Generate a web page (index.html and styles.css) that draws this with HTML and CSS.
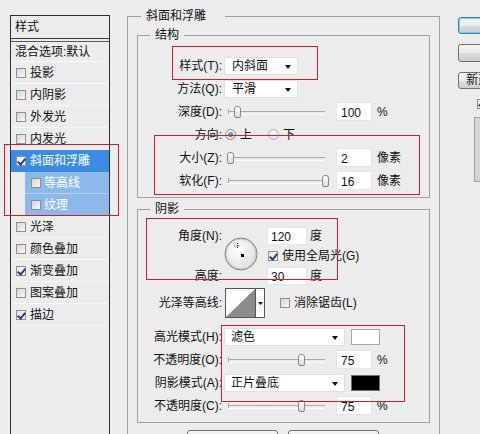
FILE: index.html
```html
<!DOCTYPE html>
<html lang="zh-CN">
<head>
<meta charset="utf-8">
<title>图层样式</title>
<link rel="stylesheet" href="styles.css">
</head>
<body>
<div class="dialog">
  <aside class="styles-panel">
    <div class="panel-head">样式</div>
    <ul class="style-list">
      <li class="row blend">混合选项:默认</li>
      <li class="row"><span class="cb"></span>投影</li>
      <li class="row"><span class="cb"></span>内阴影</li>
      <li class="row"><span class="cb"></span>外发光</li>
      <li class="row"><span class="cb"></span>内发光</li>
      <li class="row sel"><span class="cb on"></span>斜面和浮雕</li>
      <li class="row sub"><span class="cb"></span>等高线</li>
      <li class="row sub"><span class="cb"></span>纹理</li>
      <li class="row"><span class="cb"></span>光泽</li>
      <li class="row"><span class="cb"></span>颜色叠加</li>
      <li class="row"><span class="cb on"></span>渐变叠加</li>
      <li class="row"><span class="cb"></span>图案叠加</li>
      <li class="row"><span class="cb on"></span>描边</li>
    </ul>
  </aside>

  <main class="settings">
    <fieldset class="group outer">
      <legend class="outer-title">斜面和浮雕</legend>

      <fieldset class="group inner structure">
        <legend class="inner-title">结构</legend>
        <div class="frow">
          <span class="lbl">样式(T):</span>
          <div class="select narrow"><span>内斜面</span><i class="caret"></i></div>
        </div>
        <div class="frow">
          <span class="lbl">方法(Q):</span>
          <div class="select narrow"><span>平滑</span><i class="caret"></i></div>
        </div>
        <div class="frow">
          <span class="lbl">深度(D):</span>
          <div class="slider"><i class="thumb" style="--v:10"></i></div>
          <span class="num">100</span><span class="unit">%</span>
        </div>
        <div class="frow">
          <span class="lbl">方向:</span>
          <span class="radio on"></span><span class="opt">上</span>
          <span class="radio down"></span><span class="opt">下</span>
        </div>
        <div class="frow">
          <span class="lbl">大小(Z):</span>
          <div class="slider"><i class="thumb" style="--v:3"></i></div>
          <span class="num">2</span><span class="unit">像素</span>
        </div>
        <div class="frow">
          <span class="lbl">软化(F):</span>
          <div class="slider"><i class="thumb" style="--v:100"></i></div>
          <span class="num">16</span><span class="unit">像素</span>
        </div>
      </fieldset>

      <fieldset class="group inner shading">
        <legend class="inner-title">阴影</legend>
        <div class="angle-block">
          <div class="lbl-col"><span>角度(N):</span><span>高度:</span></div>
          <svg class="dial" width="34" height="34" viewBox="0 0 34 34">
            <defs>
              <radialGradient id="dialFill" cx="42%" cy="38%" r="65%">
                <stop offset="0" stop-color="#ffffff"/>
                <stop offset="1" stop-color="#dedede"/>
              </radialGradient>
            </defs>
            <circle cx="17" cy="17" r="16" fill="url(#dialFill)" stroke="#7a7a7a"/>
            <circle cx="17" cy="17" r="15" fill="none" stroke="#c4c4c4"/>
            <path d="M13.5 6v6M10.5 9h6" stroke="#333" stroke-width="1" stroke-dasharray="1 1"/>
            <rect x="17" y="17" width="3" height="3" fill="#000"/>
          </svg>
          <div class="val-col">
            <div class="vrow"><span class="num wide">120</span><span class="unit near">度</span></div>
            <div class="vrow"><span class="cb on global"></span><span class="cb-text">使用全局光(G)</span></div>
            <div class="vrow"><span class="num wide">30</span><span class="unit near">度</span></div>
          </div>
        </div>

        <div class="frow contour-row">
          <span class="lbl">光泽等高线:</span>
          <svg class="contour" width="40" height="30" viewBox="0 0 40 30">
            <rect x="0.5" y="0.5" width="39" height="29" fill="#fff" stroke="#555"/>
            <path d="M1 29L30 1V29Z" fill="#8c8c8c"/>
            <path d="M30.5 1V29" stroke="#555"/>
            <path d="M33 14h5l-2.5 3z" fill="#111"/>
          </svg>
          <span class="cb aa"></span><span class="cb-text">消除锯齿(L)</span>
        </div>
        <div class="frow">
          <span class="lbl">高光模式(H):</span>
          <div class="select wide-sel"><span>滤色</span><i class="caret"></i></div>
          <span class="swatch white"></span>
        </div>
        <div class="frow">
          <span class="lbl">不透明度(O):</span>
          <div class="slider"><i class="thumb" style="--v:76"></i></div>
          <span class="num">75</span><span class="unit">%</span>
        </div>
        <div class="frow">
          <span class="lbl">阴影模式(A):</span>
          <div class="select wide-sel"><span>正片叠底</span><i class="caret"></i></div>
          <span class="swatch black"></span>
        </div>
        <div class="frow">
          <span class="lbl">不透明度(C):</span>
          <div class="slider"><i class="thumb" style="--v:76"></i></div>
          <span class="num">75</span><span class="unit">%</span>
        </div>
      </fieldset>

      <div class="default-buttons">
        <button class="btn">设置为默认值</button>
        <button class="btn">复位为默认值</button>
      </div>
    </fieldset>
  </main>

  <div class="side">
    <button class="btn side-btn primary">确定</button>
    <button class="btn side-btn cancel">取消</button>
    <button class="btn side-btn new">新建样式(W)...</button>
    <div class="preview-row"><span class="cb on"></span><span class="cb-text">预览(V)</span></div>
    <div class="preview-box"></div>
  </div>

  <div class="mark mark-list"></div>
  <div class="mark mark-style"></div>
  <div class="mark mark-size"></div>
  <div class="mark mark-angle"></div>
  <div class="mark mark-mode"></div>
</div>
</body>
</html>
```

FILE: styles.css
```css
* { box-sizing: border-box; }

html, body { margin: 0; padding: 0; }

body {
  width: 480px;
  height: 434px;
  overflow: hidden;
  background: #ececec;
  color: #111;
  font: 12px/1 "Liberation Sans", "Noto Sans CJK SC", sans-serif;
}

.dialog {
  position: relative;
  display: flex;
  align-items: flex-start;
  width: 480px;
  height: 434px;
  overflow: hidden;
}

/* ---------- style list on the left ---------- */
.styles-panel {
  flex: none;
  width: 100px;
  height: 440px;
  margin: 15px 0 0 10px;
  border: 1px solid #2e2e2e;
  border-bottom: none;
  background: #ececec;
}

.panel-head {
  height: 23px;
  padding-left: 4px;
  line-height: 22px;
  border-bottom: 1px solid #3a3a3a;
}

.style-list {
  list-style: none;
  margin: 2px 0 0;
  padding: 0;
  border-top: 1px solid #5a5a5a;
}

.row {
  display: flex;
  align-items: center;
  height: 22px;
  padding-left: 5px;
  border-bottom: 1px solid #f7f7f7;
  white-space: nowrap;
}

.row .cb { margin-right: 4px; }

.row.blend {
  height: 20px;
  padding-left: 4px;
}

.row.sel {
  background: #3a8be4;
  color: #fff;
  border-bottom-color: #3a8be4;
}

.row.sub {
  margin-left: 14px;
  padding-left: 6px;
  background: #8cb9ea;
  color: #fff;
  border-bottom-color: #b4d1f1;
}

.row.sub .cb { margin-right: 3px; }

/* checkbox */
.cb {
  position: relative;
  flex: none;
  width: 10px;
  height: 10px;
  border: 1px solid #8f8f8f;
  background: linear-gradient(135deg, #d4d4d4, #f8f8f8);
}

.cb.on { background: linear-gradient(135deg, #e4e4e4, #ffffff); }

.cb.on::after {
  content: "";
  position: absolute;
  left: 2px;
  top: 0;
  width: 3px;
  height: 6px;
  border: solid #2b3c7c;
  border-width: 0 2px 2px 0;
  transform: rotate(40deg);
}

/* ---------- settings area ---------- */
.settings {
  flex: none;
  width: 313px;
  margin: 8px 0 0 17px;
}

.group {
  margin: 0;
  min-width: 0;
  border: 1px solid #a0a0a0;
}

.group > legend {
  height: 16px;
  line-height: 16px;
}

.outer {
  height: 470px;
  padding: 3px 9px 0;
}

.outer-title {
  margin-left: 4px;
  padding: 0 19px 0 5px;
}

.inner { padding: 0; }

.inner-title {
  margin-left: 12px;
  padding: 0 5px;
}

.structure { padding: 11px 0 5px; }

.shading {
  margin-top: 3px;
  padding: 10px 0 5px;
}

.frow {
  display: flex;
  align-items: center;
  height: 23px;
  white-space: nowrap;
}

.lbl {
  flex: none;
  width: 84px;
  margin-right: 2px;
  text-align: right;
}

/* drop-down boxes */
.select {
  position: relative;
  display: flex;
  align-items: center;
  height: 18px;
  padding-left: 7px;
  background: #fff;
  border: 1px solid #e0e0e0;
}

.select.narrow { width: 74px; }

.select.wide-sel {
  width: 121px;
  padding-left: 6px;
}

.caret {
  position: absolute;
  right: 6px;
  top: 7px;
  width: 0;
  height: 0;
  border-left: 3.5px solid transparent;
  border-right: 3.5px solid transparent;
  border-top: 4px solid #111;
}

/* sliders */
.slider {
  position: relative;
  flex: none;
  width: 108px;
  height: 14px;
}

.slider::before {
  content: "";
  position: absolute;
  left: 4px;
  right: 7px;
  top: 6px;
  height: 2px;
  border-top: 1px solid #a9a9a9;
  border-bottom: 1px solid #fdfdfd;
}

.slider::after {
  content: "";
  position: absolute;
  left: 4px;
  top: 4px;
  width: 1px;
  height: 5px;
  background: #a9a9a9;
}

.thumb {
  position: absolute;
  z-index: 1;
  top: 1px;
  left: calc(4px + var(--v) * 0.97px - 3.5px);
  width: 7px;
  height: 12px;
  border: 1px solid #888;
  border-radius: 3px 3px 2px 2px;
  background: linear-gradient(#ffffff, #d9d9d9);
}

/* numeric fields */
.num {
  flex: none;
  width: 36px;
  height: 19px;
  margin-left: 4px;
  padding: 4px 0 0 4px;
  background: #fff;
  border: 1px solid #e6e6e6;
}

.num.wide {
  width: 40px;
  height: 18px;
  margin-left: 0;
  padding: 3px 0 0 3px;
}

.unit { margin-left: 5px; }
.unit.near { margin-left: 3px; }

/* radio buttons */
.radio {
  position: relative;
  flex: none;
  width: 11px;
  height: 11px;
  margin-left: 1px;
  border-radius: 50%;
  border: 1px solid #878787;
  background: radial-gradient(circle at 40% 35%, #ffffff, #d6d6d6);
}

.radio.on::after {
  content: "";
  position: absolute;
  inset: 2px;
  border-radius: 50%;
  background: radial-gradient(circle at 40% 35%, #8cb0dc, #1f4f96);
}

.radio.down {
  margin-left: 16px;
  border-color: #b3b3b3;
}

.opt { margin-left: 4px; }

/* angle / altitude block */
.angle-block {
  display: flex;
  align-items: flex-start;
  height: 58px;
}

.lbl-col {
  display: flex;
  flex-direction: column;
  justify-content: space-between;
  align-items: flex-end;
  width: 84px;
  height: 58px;
}

.lbl-col span {
  height: 18px;
  line-height: 18px;
}

.dial {
  flex: none;
  margin: 10px 0 0 2px;
}

.val-col {
  display: flex;
  flex-direction: column;
  gap: 2px;
  margin-left: 9px;
}

.vrow {
  display: flex;
  align-items: center;
  height: 18px;
  white-space: nowrap;
}

.global { margin-left: 1px; }

.cb-text { margin-left: 4px; }

.contour-row {
  height: 32px;
  margin: 2px 0 6px;
}

.contour {
  flex: none;
  margin-left: 1px;
}

.cb.aa { margin-left: 15px; }

.swatch {
  flex: none;
  width: 29px;
  height: 16px;
  margin-left: 6px;
}

.swatch.white {
  background: #fff;
  border: 1px solid #a5a5a5;
}

.swatch.black {
  background: #000;
  border: 1px solid #6d6d6d;
}

/* push buttons */
.btn {
  display: block;
  margin: 0;
  padding: 3px 0 0;
  font: inherit;
  line-height: 12px;
  color: #111;
  text-align: center;
  border: 1px solid #707070;
  border-radius: 3px;
  background: linear-gradient(#f4f4f4 0%, #ebebeb 50%, #dcdcdc 51%, #cfcfcf 100%);
  white-space: nowrap;
}

.default-buttons {
  display: flex;
  gap: 10px;
  margin: 7px 0 0 50px;
}

.default-buttons .btn {
  width: 91px;
  height: 22px;
}

.side {
  flex: none;
  display: flex;
  flex-direction: column;
  align-items: flex-start;
  margin: 17px 0 0 18px;
}

.side-btn {
  width: 94px;
  height: 17px;
  padding: 0;
  line-height: 15px;
}

.side-btn.primary {
  border-color: #3c7fb1;
  box-shadow: inset 0 0 0 1px #6fd0f7;
}

.side-btn.cancel {
  height: 18px;
  margin-top: 10px;
}

.side-btn.new { margin-top: 10px; }

.preview-row {
  display: flex;
  align-items: center;
  height: 10px;
  margin: 10px 0 0 19px;
  white-space: nowrap;
}

.preview-box {
  width: 60px;
  height: 65px;
  margin: 8px 0 0 16px;
  background: #d5d5d5;
  border: 1px solid #a3a3a3;
}

/* red annotation frames drawn over the dialog */
.mark {
  position: absolute;
  z-index: 5;
  border: 1px solid #c9202e;
  pointer-events: none;
}

.mark-list  { left: 4px;   top: 144px; width: 115px; height: 72px; }
.mark-style { left: 172px; top: 46px;  width: 146px; height: 34px; }
.mark-size  { left: 154px; top: 135px; width: 266px; height: 60px; }
.mark-angle { left: 146px; top: 218px; width: 192px; height: 62px; }
.mark-mode  { left: 221px; top: 325px; width: 184px; height: 77px; }
```
